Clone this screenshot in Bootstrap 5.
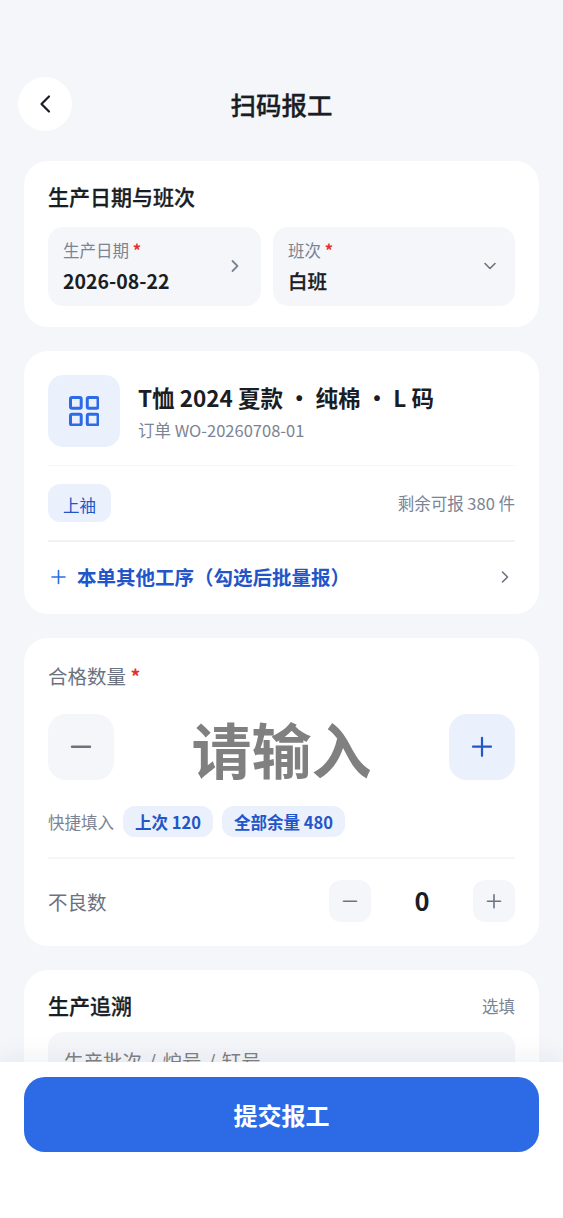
<!DOCTYPE html>
<html lang="zh-CN">
<head>
<meta charset="utf-8">
<meta name="viewport" content="width=device-width, initial-scale=1">
<title>扫码报工</title>
<link href="https://cdn.jsdelivr.net/npm/bootstrap@5.3.0/dist/css/bootstrap.min.css" rel="stylesheet">
<style>
:root{--ink:#1a1d24;--soft:#6b7280;--mute:#7b8494;--fill:#f4f6fa;--tint:#eaf0fc;--brand:#2d6be6;--brand-dark:#2255c8}
body{font-family:"Noto Sans CJK SC","Noto Sans",sans-serif;background:#f4f6fa;color:var(--ink);height:1218px;overflow:hidden;line-height:1.5}
svg{display:block;fill:none;stroke:currentColor;stroke-linecap:round;stroke-linejoin:round;flex:none}
.topbar{height:161px;padding:77px 18px 0;display:grid;grid-template-columns:54px 1fr 54px}
.back{width:54px;height:54px;color:var(--ink)}
.page-title{font-size:25.5px;line-height:54px}
.page-title,.heading,.semi{font-weight:500;-webkit-text-stroke:.3px currentColor}
.panel{border:0;border-radius:24px;padding:24px;background:#fff}
.stack{padding:0 24px;gap:24px}
.heading{font-size:21px;line-height:22px}
.field{background:var(--fill);border-radius:15px;height:79px;padding:7px 15px 8px}
.field-date{width:213px}
.t16{font-size:16.5px;line-height:30px;color:var(--mute)}
.field .t16{line-height:29px}
.field .t19{line-height:32px}
.t19{font-size:19.5px;line-height:30px}
.med{font-weight:600}
.req{color:#e5302a;font-weight:600}
.tile{width:72px;height:72px;border-radius:15px;background:var(--tint);color:var(--brand)}
.name{font-size:22.5px;line-height:33px;font-weight:600}
.rule{height:1.5px;background:#f5f6f8}
.rule-strong{height:2px;background:#f2f2f3}
.tag{height:38px;border-radius:12px;background:var(--tint);color:var(--brand-dark);padding:6px 15px 0;font-size:16.5px;line-height:30px}
.more{color:var(--brand-dark);margin-bottom:-24px;height:70px}
.step{border:0;padding:0;display:flex;align-items:center;justify-content:center;background:var(--fill);color:var(--soft)}
.step-lg{width:66px;height:66px;border-radius:18px}
.step-sm{width:42px;height:42px;border-radius:12px}
.step-add{background:var(--tint);color:var(--brand-dark)}
.qty{font-size:60px;line-height:68px;height:66px;font-weight:700;color:#808080}
.chip{background:var(--tint);color:var(--brand-dark);font-size:16.5px;line-height:32px;height:31px;border-radius:12px;padding:0 12px;font-weight:600}
.count{width:102px;font-size:25.5px;line-height:40px;height:42px;font-weight:600}
.trace{background:var(--fill);border-radius:15px;height:78px;padding:14px 16px;font-size:19.5px;line-height:29px;color:#808080;word-spacing:2px}
.actions{height:156px;background:#fff;padding:15px 24px;box-shadow:0 -6px 24px rgba(20,30,60,.06)}
.submit,.submit:hover{background:var(--brand);color:#fff;height:75px;border-radius:21px;border:0;font-size:24px;font-weight:700;line-height:75px;padding:0}
</style>
</head>
<body>
<header class="topbar">
  <button class="btn back rounded-circle bg-white border-0 p-0 d-flex align-items-center justify-content-center" aria-label="返回">
    <svg width="12" height="20" viewBox="0 0 12 20" stroke-width="2.2"><path d="M10 2.500 2.500 10l7.500 7.500"/></svg>
  </button>
  <h1 class="page-title text-center mb-0">扫码报工</h1>
</header>
<main class="stack d-flex flex-column">
  <section class="card panel" style="height:166px">
    <h2 class="heading mb-0">生产日期与班次</h2>
    <div class="d-flex mt-auto" style="gap:12px;margin-bottom:-3px">
      <div class="field field-date d-flex align-items-center justify-content-between">
        <div><div class="t16">生产日期 <span class="req">*</span></div><div class="t19 med">2026-08-22</div></div>
        <svg style="margin-right:5px" width="12" height="14" viewBox="0 0 12 14" stroke-width="1.8" color="#7b8494"><path d="m3.500 2 5 5-5 5"/></svg>
      </div>
      <div class="field flex-grow-1 d-flex align-items-center justify-content-between">
        <div><div class="t16">班次 <span class="req">*</span></div><div class="t19 semi">白班</div></div>
        <svg style="margin-right:1px" width="18" height="14" viewBox="0 0 18 14" stroke-width="1.600" color="#6b7280"><path d="m4 4.500 5 5 5-5"/></svg>
      </div>
    </div>
  </section>

  <section class="card panel" style="height:263px">
    <div class="d-flex align-items-center" style="gap:18px;height:72px">
      <div class="tile d-flex align-items-center justify-content-center">
        <svg width="30.5" height="30.5" viewBox="0 0 30.5 30.5" stroke-width="3"><rect x="1.500" y="1.500" width="10.700" height="10.700" rx="1.500"/><rect x="18.300" y="1.500" width="10.700" height="10.700" rx="1.500"/><rect x="1.500" y="18.300" width="10.700" height="10.700" rx="1.500"/><rect x="18.300" y="18.300" width="10.700" height="10.700" rx="1.500"/></svg>
      </div>
      <div class="pt-1"><div class="name">T恤 2024 夏款 · 纯棉 · L 码</div><div class="t16" style="line-height:32px">订单 WO-20260708-01</div></div>
    </div>
    <div class="rule" style="margin-top:17.500px"></div>
    <div class="d-flex justify-content-between align-items-center" style="margin:18px 0">
      <span class="tag">上袖</span><span class="t16">剩余可报 380 件</span>
    </div>
    <div class="rule-strong"></div>
    <div class="more d-flex align-items-center">
      <svg width="21" height="20" viewBox="0 0 21 20" stroke-width="1.600" color="#2d6be6"><path d="M10.500 3.500v13M4 10h13"/></svg>
      <span class="t19 med ms-2 me-auto">本单其他工序（勾选后批量报）</span>
      <svg class="me-1" width="12" height="14" viewBox="0 0 12 14" stroke-width="1.600" color="#6b7280"><path d="m3.500 2 5 5-5 5"/></svg>
    </div>
  </section>

  <section class="card panel" style="height:308px">
    <div class="t19" style="color:var(--soft);line-height:28px">合格数量 <span class="req">*</span></div>
    <div class="d-flex justify-content-between" style="margin-top:24px">
      <button class="step step-lg" aria-label="减少"><svg width="24" height="24" viewBox="0 0 24 24" stroke-width="2.400"><path d="M3 11.700h18"/></svg></button>
      <div class="qty">请输入</div>
      <button class="step step-lg step-add" aria-label="增加"><svg width="24" height="24" viewBox="0 0 24 24" stroke-width="2.200"><path d="M12 2.800v18M3 11.700h18"/></svg></button>
    </div>
    <div class="d-flex align-items-center" style="gap:9px;margin-top:26px">
      <span class="t16" style="line-height:32px;height:31px">快捷填入</span><span class="chip">上次 120</span><span class="chip">全部余量 480</span>
    </div>
    <div class="rule" style="margin-top:20px"></div>
    <div class="d-flex align-items-center" style="margin-top:21px">
      <span class="t19 me-auto" style="color:var(--soft);line-height:32px;height:30px">不良数</span>
      <button class="step step-sm" aria-label="减少"><svg width="18" height="18" viewBox="0 0 18 18" stroke-width="1.600"><path d="M2.500 9.300h13"/></svg></button>
      <span class="count text-center">0</span>
      <button class="step step-sm" aria-label="增加"><svg width="18" height="18" viewBox="0 0 18 18" stroke-width="1.600"><path d="M9 2.800v13M2.500 9.300h13"/></svg></button>
    </div>
  </section>

  <section class="card panel">
    <div class="d-flex justify-content-between align-items-start" style="height:24px"><h2 class="heading mb-0">生产追溯</h2><span class="t16" style="line-height:24px">选填</span></div>
    <div class="trace" style="margin-top:14px">生产批次 / 炉号 / 缸号</div>
  </section>
</main>
<footer class="actions fixed-bottom">
  <button class="btn submit w-100">提交报工</button>
</footer>
<script src="https://cdn.jsdelivr.net/npm/bootstrap@5.3.0/dist/js/bootstrap.bundle.min.js"></script>
</body>
</html>
